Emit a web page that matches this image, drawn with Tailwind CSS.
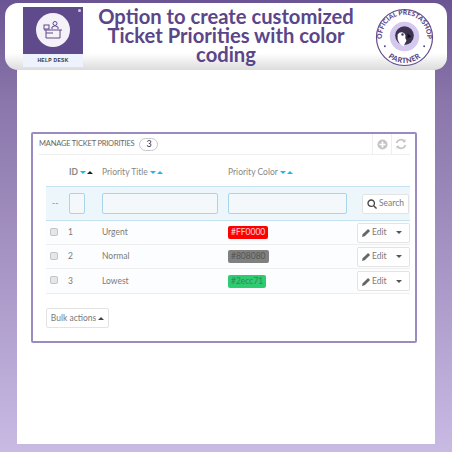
<!DOCTYPE html>
<html lang="en">
<head>
    <meta charset="UTF-8">
    <title>Ticket Priorities</title>
    <script src="https://cdn.jsdelivr.net/npm/@tailwindcss/browser@4"></script>
</head>
<body class="w-[452px] h-[452px] overflow-hidden bg-gradient-to-b from-[#6b5493] via-[#8a76aa] via-[22%] to-[#c9bae4] font-['Lato',sans-serif]">
    <!-- Banner -->
    <div class="mx-[5px] mt-[3px] h-[67px] bg-gradient-to-b from-white from-75% to-[#dcdcdc] rounded-[13px] flex items-center relative z-10">
        <!-- Help desk tile -->
        <div class="ml-[18px] w-[60px] h-[60px] flex flex-col shrink-0">
            <div class="h-[47px] bg-[#5f4a8b] flex items-center justify-center relative">
                <span class="absolute top-[2px] right-[2px] w-[3px] h-[3px] rounded-full bg-white/70"></span>
                <div class="w-[34px] h-[34px] rounded-full bg-[#f4f1f8] flex items-center justify-center">
                    <svg width="22" height="22" viewBox="0 0 22 22" fill="none" stroke="#5f4a8b" stroke-width="1">
                        <circle cx="13" cy="4.5" r="2"/>
                        <path d="M10 10v-2q3-2.500 6 0v2"/>
                        <rect x="2" y="6" width="5" height="4"/>
                        <path d="M2 11h18M4 11v8h14v-8M4 14h7"/>
                    </svg>
                </div>
            </div>
            <div class="h-[13px] bg-[#eef2fc] flex items-center justify-center text-[5px] leading-none font-bold tracking-[0.3px] text-[#333] font-['Liberation_Sans',sans-serif]">HELP DESK</div>
        </div>
        <h1 class="w-[270px] ml-[8px] -mt-[2px] text-center text-[#5a4688] text-[20.2px] leading-[19px] font-bold">Option to create customized<br>Ticket Priorities with color<br>coding</h1>
        <!-- Partner badge -->
        <svg class="ml-[14px] mt-[1px] shrink-0" width="59" height="59" viewBox="0 0 60 60">
            <circle cx="30" cy="30" r="28.5" fill="#fff" stroke="#5f4a8b" stroke-width="1.2"/>
            <circle cx="30" cy="29" r="15" fill="#d4c8ee"/>
            <circle cx="30" cy="28" r="9.5" fill="#3d3350"/>
            <path d="M23 27q3-4 7-1l1 2q-1 3 1 5l-3 6q-7-3-6-12z" fill="#fff"/>
            <path d="M33 26l4 3-4 2z" fill="#111"/>
            <circle cx="28" cy="27" r="1.200" fill="#3d3350"/>
            <defs>
                <path id="arcTop" d="M7.7 35a22.900 22.900 0 1 1 44.600 0"/>
                <path id="arcBottom" d="M8.700 44.900a26 26 0 0 0 42.600 0"/>
            </defs>
            <text font-size="6.800" font-weight="900" fill="#5a4688" font-family="Lato, sans-serif"><textPath href="#arcTop" startOffset="50%" text-anchor="middle">OFFICIAL PRESTASHOP</textPath></text>
            <text font-size="7.500" font-weight="900" fill="#5a4688" font-family="Lato, sans-serif" letter-spacing="0.3"><textPath href="#arcBottom" startOffset="50%" text-anchor="middle">PARTNER</textPath></text>
            <circle cx="10" cy="39" r="1" fill="#5a4688"/>
            <circle cx="50" cy="39" r="1" fill="#5a4688"/>
        </svg>
    </div>

    <!-- Screenshot panel -->
    <div class="mx-[17px] w-[418px] h-[374px] bg-white pt-[62px] pl-[14px]">
        <div class="w-[386px] h-[211px] bg-white border-2 border-[#9a8cc0] rounded-[2px] pl-[13px] pr-[5px] text-[#7a7a7a] text-[8.5px]">
            <!-- Card heading -->
            <div class="h-[21px] -ml-[7px] border-b border-[#eeeeee] flex items-center text-[#666] text-[7.5px] tracking-[-0.2px]">
                <span>MANAGE TICKET PRIORITIES</span>
                <span class="ml-[5px] w-[19px] h-[13px] rounded-full border border-[#c8c8c8] flex items-center justify-center text-[9px] text-[#333]">3</span>
                <div class="ml-auto flex h-full items-center">
                    <div class="w-[19px] h-full border-l border-[#eeeeee] flex items-center justify-center">
                        <svg width="11" height="11" viewBox="0 0 11 11"><circle cx="5.5" cy="5.5" r="5" fill="#c4c4c4"/><path d="M5.5 2.5v6M2.5 5.5h6" stroke="#fff" stroke-width="1.6"/></svg>
                    </div>
                    <div class="w-[19px] h-full border-l border-[#eeeeee] flex items-center justify-center">
                        <svg width="12" height="12" viewBox="0 0 12 12" fill="none" stroke="#c4c4c4" stroke-width="1.7"><path d="M1.5 5a4.6 4.6 0 0 1 8-1.6M10.500 7a4.6 4.6 0 0 1-8 1.6"/><path d="M10.5 1v3.2H7.3M1.5 11V7.8h3.2" fill="#c4c4c4" stroke="none"/></svg>
                    </div>
                </div>
            </div>
            <!-- Column titles -->
            <div class="h-[31px] pt-[3px] flex items-center text-[#888]">
                <div class="w-[23px] ml-[23px] flex items-center gap-[2px] font-bold">ID<span class="flex gap-[1px]"><i class="w-0 h-0 border-x-[3px] border-x-transparent border-t-[3px] border-t-[#1fb6f0]"></i><i class="w-0 h-0 border-x-[3px] border-x-transparent border-b-[3px] border-b-[#222]"></i></span></div>
                <div class="ml-[10px] w-[126px] flex items-center gap-[2px]">Priority Title<span class="flex gap-[1px]"><i class="w-0 h-0 border-x-[3px] border-x-transparent border-t-[3px] border-t-[#1fb6f0]"></i><i class="w-0 h-0 border-x-[3px] border-x-transparent border-b-[3px] border-b-[#1fb6f0]"></i></span></div>
                <div class="flex items-center gap-[2px]">Priority Color<span class="flex gap-[1px]"><i class="w-0 h-0 border-x-[3px] border-x-transparent border-t-[3px] border-t-[#1fb6f0]"></i><i class="w-0 h-0 border-x-[3px] border-x-transparent border-b-[3px] border-b-[#1fb6f0]"></i></span></div>
            </div>
            <!-- Filter row -->
            <div class="h-[35px] bg-[#ecf6fb] border-y border-[#c4e2f1] flex items-center">
                <span class="w-[23px] pl-[6px] text-[#888]">--</span>
                <div class="w-[16px] h-[21px] bg-[#f4f8fa] border border-[#a9d5ec] rounded-[2px]"></div>
                <div class="ml-[17px] w-[116px] h-[21px] bg-[#f4f8fa] border border-[#a9d5ec] rounded-[2px]"></div>
                <div class="ml-[10px] w-[119px] h-[21px] bg-[#f4f8fa] border border-[#a9d5ec] rounded-[2px]"></div>
                <div class="ml-[15px] w-[47px] h-[20px] bg-white border border-[#e3e3e3] rounded-[2px] flex items-center justify-center gap-[2px]">
                    <svg width="10" height="10" viewBox="0 0 9 9" fill="none" stroke="#444" stroke-width="1.2"><circle cx="3.8" cy="3.8" r="2.9"/><path d="M6 6l2.6 2.6"/></svg>
                    Search
                </div>
            </div>
            <!-- Rows -->
            <div class="h-[24px] bg-[#fcfdfe] border-b border-[#eeeeee] flex items-center">
                <span class="ml-[4px] -mt-[2px] w-[8px] h-[8px] rounded-[2px] bg-[#e6e6e6] border border-[#c4c4c4]"></span>
                <span class="ml-[10px] w-[34px]">1</span>
                <span class="w-[126px]">Urgent</span>
                <span class="h-[13px] px-[3px] rounded-[2px] bg-[#ff0000] text-white/80 flex items-center">#FF0000</span>
                <div class="ml-auto w-[53px] h-[20px] bg-white border border-[#e3e3e3] rounded-[2px] flex items-center pl-[4px] gap-[1px]">
                    <svg width="9" height="9" viewBox="0 0 8 8" fill="#666"><path d="M0 8l.6-2.4L5.4.8l1.8 1.8-4.8 4.8z"/></svg>
                    Edit<i class="ml-[8px] w-0 h-0 border-x-[3px] border-x-transparent border-t-[3px] border-t-[#555]"></i>
                </div>
            </div>
            <div class="h-[24px] bg-[#fcfdfe] border-b border-[#eeeeee] flex items-center">
                <span class="ml-[4px] -mt-[2px] w-[8px] h-[8px] rounded-[2px] bg-[#e6e6e6] border border-[#c4c4c4]"></span>
                <span class="ml-[10px] w-[34px]">2</span>
                <span class="w-[126px]">Normal</span>
                <span class="h-[13px] px-[3px] rounded-[2px] bg-[#808080] text-[#555] flex items-center">#808080</span>
                <div class="ml-auto w-[53px] h-[20px] bg-white border border-[#e3e3e3] rounded-[2px] flex items-center pl-[4px] gap-[1px]">
                    <svg width="9" height="9" viewBox="0 0 8 8" fill="#666"><path d="M0 8l.6-2.4L5.4.8l1.8 1.8-4.8 4.8z"/></svg>
                    Edit<i class="ml-[8px] w-0 h-0 border-x-[3px] border-x-transparent border-t-[3px] border-t-[#555]"></i>
                </div>
            </div>
            <div class="h-[25px] bg-[#fcfdfe] border-b border-[#eeeeee] flex items-center">
                <span class="ml-[4px] -mt-[2px] w-[8px] h-[8px] rounded-[2px] bg-[#e6e6e6] border border-[#c4c4c4]"></span>
                <span class="ml-[10px] w-[34px]">3</span>
                <span class="w-[126px]">Lowest</span>
                <span class="h-[13px] px-[3px] rounded-[2px] bg-[#2ecc71] text-[#3f7f5a] flex items-center">#2ecc71</span>
                <div class="ml-auto w-[53px] h-[20px] bg-white border border-[#e3e3e3] rounded-[2px] flex items-center pl-[4px] gap-[1px]">
                    <svg width="9" height="9" viewBox="0 0 8 8" fill="#666"><path d="M0 8l.6-2.4L5.4.8l1.8 1.8-4.8 4.8z"/></svg>
                    Edit<i class="ml-[8px] w-0 h-0 border-x-[3px] border-x-transparent border-t-[3px] border-t-[#555]"></i>
                </div>
            </div>
            <!-- Bulk actions -->
            <div class="mt-[14px] w-[63px] h-[20px] bg-white border border-[#e3e3e3] rounded-[2px] flex items-center justify-center gap-[2px]">
                Bulk actions<i class="w-0 h-0 border-x-[3px] border-x-transparent border-b-[3px] border-b-[#444]"></i>
            </div>
        </div>
    </div>
</body>
</html>
